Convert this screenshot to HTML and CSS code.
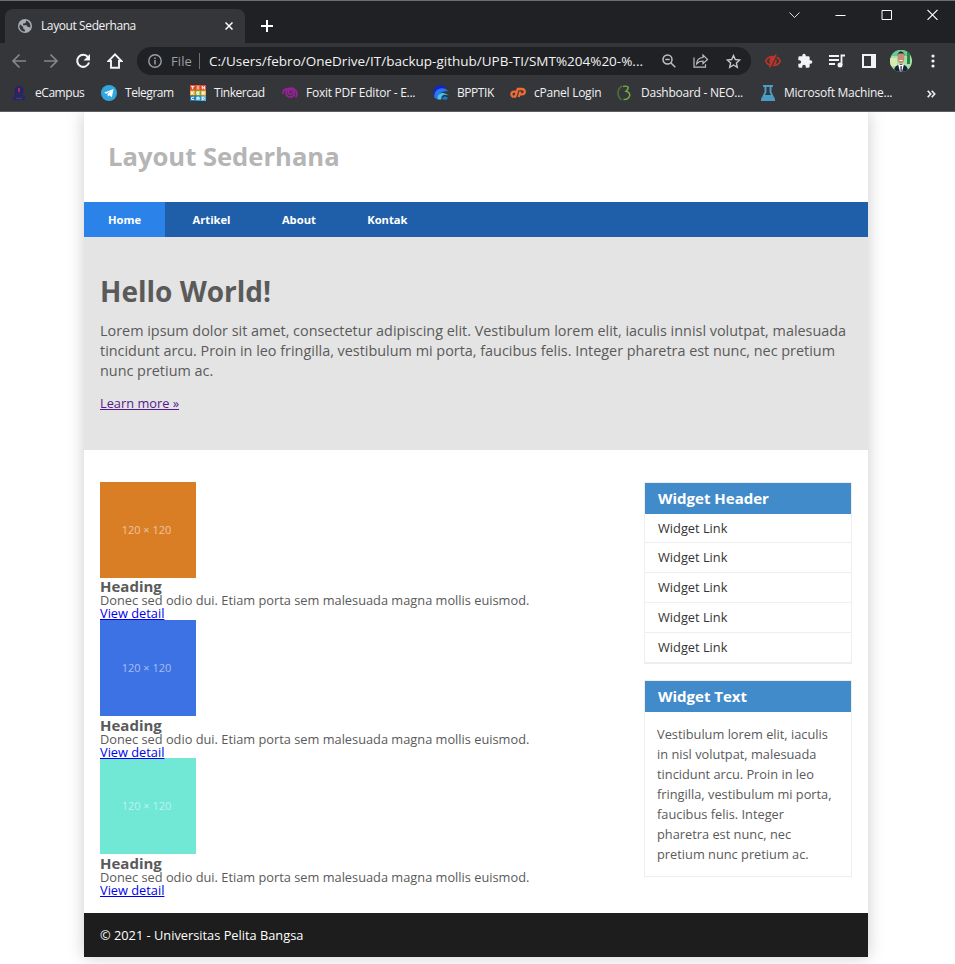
FILE: index.html
```html
<!DOCTYPE html>
<html lang="id">
<head>
<meta charset="utf-8">
<title>Layout Sederhana</title>
<link rel="stylesheet" href="styles.css">
</head>
<body>
<div class="browser">
  <div class="tabstrip">
    <div class="tab">
      <svg class="globe" width="14" height="14" viewBox="0 0 14 14"><circle cx="7" cy="7" r="7" fill="#a9adb2"/><path d="M2 5.2 5.2 8v1.4L7 11v1.6C3.800 12.600 1.400 10.200 1.400 7ZM8 1.500v1.700L6.500 4.400H5v1.800h3.400L9.800 8h1.400l1 .8c.9-2.800-.700-6.400-4.200-7.300Z" fill="#35363a"/></svg>
      <span class="tab-title">Layout Sederhana</span>
      <svg class="tab-close" width="8" height="8" viewBox="0 0 8 8"><path d="m.5.5 7 7m0-7-7 7" stroke="#fff" stroke-width="1.5"/></svg>
    </div>
    <svg class="new-tab" width="12" height="12" viewBox="0 0 12 12"><path d="M6 0v12M0 6h12" stroke="#fff" stroke-width="2"/></svg>
    <div class="window-controls">
      <svg width="11" height="11" viewBox="0 0 11 11"><path d="m.5 3.500 5 5 5-5" fill="none" stroke="#ddd"/></svg>
      <svg width="11" height="11" viewBox="0 0 11 11"><path d="M.5 6.500h10" stroke="#fff"/></svg>
      <svg width="11" height="11" viewBox="0 0 11 11"><path d="M1 1.500h9.500v9H1Z" fill="none" stroke="#fff"/></svg>
      <svg width="11" height="11" viewBox="0 0 11 11"><path d="m.5.8 10 10m0-10-10 10" stroke="#fff" stroke-width="1.200"/></svg>
    </div>
  </div>
  <div class="toolbar">
    <div class="nav-icons">
      <svg width="16" height="16" viewBox="0 0 16 16"><path d="M15 8H2m6.500-6.500L2 8l6.500 6.500" fill="none" stroke="#85878a" stroke-width="1.700"/></svg>
      <svg width="16" height="16" viewBox="0 0 16 16"><path d="M1 8h13M7.500 1.500 14 8l-6.500 6.500" fill="none" stroke="#85878a" stroke-width="1.700"/></svg>
      <svg width="16" height="16" viewBox="0 0 16 16"><path d="M13 4.200A6 6 0 1 0 14 9.500" fill="none" stroke="#f4f4f4" stroke-width="2"/><path d="M15 1v6.500H8.500Z" fill="#f4f4f4"/></svg>
      <svg width="16" height="16" viewBox="0 0 16 16"><path d="M8 1.400 1.500 8H4v6.800h8V8h2.500Z" fill="none" stroke="#f4f4f4" stroke-width="1.900"/></svg>
    </div>
    <div class="omnibox">
      <svg class="info" width="14" height="14" viewBox="0 0 14 14"><circle cx="7" cy="7" r="6.200" fill="none" stroke="#9aa0a6" stroke-width="1.400"/><path d="M7 6v4.500M7 3.400v1.500" stroke="#9aa0a6" stroke-width="1.500"/></svg>
      <span class="scheme">File</span>
      <span class="divider"></span>
      <span class="url">C:/Users/febro/OneDrive/IT/backup-github/UPB-TI/SMT%204%20-%...</span>
      <div class="omni-actions">
        <svg width="14" height="14" viewBox="0 0 14 14"><circle cx="5.500" cy="5.500" r="4.500" fill="none" stroke="#bcbfc3" stroke-width="1.500"/><path d="m9 9 4.300 4.300M3.300 5.500h4.400" stroke="#bcbfc3" stroke-width="1.500"/></svg>
        <svg width="16" height="14" viewBox="0 0 16 14"><path d="M1 3.500v9.700h11.500v-3M10 1v2.500C6 3.700 4 6 3.600 9.800 5.200 7.700 7 7 10 7v2.700L14.500 5.400Z" fill="none" stroke="#bcbfc3" stroke-width="1.200"/></svg>
        <svg width="15" height="15" viewBox="0 0 15 15"><path d="m7.500 1.500 1.800 4 4.400.500-3.300 2.900.9 4.400-3.800-2.300-3.800 2.300.9-4.400L1.300 6l4.400-.5Z" fill="none" stroke="#c4c7ca" stroke-width="1.400"/></svg>
      </div>
    </div>
    <div class="extensions">
      <svg width="16" height="14" viewBox="0 0 16 14"><path d="M.7 7C3.400 1 12.600 1 15.300 7 12.600 13 3.400 13 .7 7Z" fill="none" stroke="#bd3527" stroke-width="1.600"/><ellipse cx="8" cy="7" rx="3.600" ry="4.500" fill="#bd3527"/><path d="M12.500 0 6 14" stroke="#35363a" stroke-width="1.300"/><path d="M11 .5 4.500 13.500" stroke="#bd3527" stroke-width="1.500"/></svg>
      <svg width="16" height="16" viewBox="0 0 24 24"><path fill="#f1f3f4" d="M20.500 11H19V7a2 2 0 0 0-2-2h-4V3.500a2.500 2.500 0 0 0-5 0V5H4a2 2 0 0 0-2 2v3.800h1.500a2.700 2.700 0 0 1 0 5.400H2V20a2 2 0 0 0 2 2h3.800v-1.500a2.700 2.700 0 0 1 5.400 0V22H17a2 2 0 0 0 2-2v-4h1.500a2.500 2.500 0 0 0 0-5Z"/></svg>
      <svg width="16" height="14" viewBox="0 0 16 14"><path d="M0 2h10M0 6h10M0 10h6M12.500 11V1.500H16" fill="none" stroke="#f1f3f4" stroke-width="1.800"/><circle cx="11" cy="11" r="2.500" fill="#f1f3f4"/></svg>
      <svg width="14" height="14" viewBox="0 0 14 14"><path fill="#f1f3f4" fill-rule="evenodd" d="M0 0h14v14H0ZM2 2v10h7V2Z"/></svg>
      <svg class="avatar" width="22" height="22" viewBox="0 0 22 22"><defs><clipPath id="face"><circle cx="11" cy="11" r="11"/></clipPath></defs><g clip-path="url(#face)"><path fill="#a7dfaa" d="M0 0h22v22H0Z"/><path fill="#69c798" d="M0 0h22v6H0Z"/><path fill="#25873d" d="M17 2h3v12h-3Z"/><path fill="#d7ebb0" d="M0 8h7v8H0Z"/><path fill="#182238" d="M4 22c0-6 3-7 7-8 5 1 7 3 7 8Z"/><path fill="#fff" d="m8 14 3 1 3-1-2 8h-2Z"/><path fill="#18223b" d="M10.500 16h1.200v6h-1.200Z"/><ellipse cx="11" cy="8" rx="3.400" ry="5.500" fill="#c98b73"/><path fill="#282326" d="M7.600 6c-.5-6 7-6 7 0l-1-2.500H8.500Z"/><path d="M9.500 10.500h3" stroke="#fff"/></g></svg>
      <svg class="menu" width="4" height="14" viewBox="0 0 4 14"><g fill="#f1f3f4"><circle cx="2" cy="2" r="1.600"/><circle cx="2" cy="7" r="1.600"/><circle cx="2" cy="12" r="1.600"/></g></svg>
    </div>
  </div>
  <div class="bookmarks">
    <div class="bookmark"><svg width="14" height="16" viewBox="0 0 14 16"><path fill="#24236c" d="M5 1h4l2.500 3v4l-1 2 2.500 2v3H1v-3l2.500-2-1-2V4Z"/><path d="M2 12h10M4 9h6" stroke="#35363a" stroke-width=".8"/><path d="M7 3v4" stroke="#b8323a" stroke-width="1.800"/><path d="M4 13.500h6" stroke="#443f86"/></svg><span class="t1">eCampus</span></div>
    <div class="bookmark"><svg width="16" height="16" viewBox="0 0 16 16"><circle cx="8" cy="8" r="8" fill="#32a7df"/><path fill="#fff" d="m3 7.800 9.500-3.900-1.600 8.300-2.700-2-1.400 1.400-.3-2.500 3.600-3.300-4.600 2.900Z"/></svg><span class="t2">Telegram</span></div>
    <div class="bookmark"><svg width="16" height="16" viewBox="0 0 15 15"><path fill="#e74b35" d="M0 0h5v5H0Z"/><path fill="#ef672d" d="M5 0h5v5H5Z"/><path fill="#e94833" d="M10 0h5v5h-5Z"/><path fill="#f7a72d" d="M0 5h5v5H0Z"/><path fill="#9ac43c" d="M5 5h5v5H5Z"/><path fill="#f2b632" d="M10 5h5v5h-5Z"/><path fill="#1777ae" d="M0 10h5v5H0Z"/><path fill="#299ad1" d="M5 10h5v5H5Z"/><path fill="#5db5d9" d="M10 10h5v5h-5Z"/><path d="M1 1.500h3M2.500 1.500V4M7.500 1v3M11.500 4V1l2.200 3V1M1.500 6v3m2.200-3-2 1.500 2 1.500M9 6.500H6.500v2.200H9M6.500 7.500h2M11.500 9V6.500h2v1.200h-2l2.200 1.500M4 11.500H1.500v2H4M6.500 14v-2.500h2V14m-2-1h2M11.500 11.500h1.200l1 1-1 1h-1.200Z" fill="none" stroke="#fff" stroke-width=".9"/></svg><span class="t3">Tinkercad</span></div>
    <div class="bookmark"><svg width="16" height="16" viewBox="0 0 16 16"><path fill="none" stroke="#9b209c" stroke-width="1.700" d="M9.700 7.200c1 1.300-.6 2.700-2.200 1.900-2-1-1.100-4 1.600-3.900 3 .1 4.300 3.300 2.400 5.500-2.600 2.800-7.700 1-7.500-3C4.200 3.600 9 2 12.300 4.200c3 2 3.300 5.800 1.200 8.300M5.500 4C2.500 3.300.5 6 1.100 9"/></svg><span class="t4">Foxit PDF Editor - E...</span></div>
    <div class="bookmark"><svg width="16" height="16" viewBox="0 0 16 16"><path fill="#1524ca" d="M.5 10C-.5 3 4 0 9 0l5 2.500-6 1-5 6Z"/><path fill="#2878ec" d="M1.500 13C0 4 10 0 15.500 6.500 11 5.500 6 7 4.500 14Z"/><path fill="#45c4ee" d="M4.500 14.500C4 7.500 10.500 6 15.800 10.500c-5-2-8 0-7.500 4Z"/><path fill="#157bd4" d="M9 14c.5-3 4-3.500 6-1l-2 2Z"/></svg><span class="t5">BPPTIK</span></div>
    <div class="bookmark"><svg width="16" height="16" viewBox="0 0 16 16"><path d="M6.300 6.600H4.200C.5 6.600.5 11.700 4 11.700h1.300L7.800 4h4c4.300 0 3.700 5.400 0 5.400H9.500M8.700 12l1.700-5.500" fill="none" stroke="#f16c35" stroke-width="2.300"/></svg><span class="t6">cPanel Login</span></div>
    <div class="bookmark"><svg width="14" height="16" viewBox="0 0 14 16"><path d="M5 1C0 4-.5 11 4.500 15" fill="none" stroke="#496e2e" stroke-width="1.700"/><path d="M6 1.500c6.500-1.500 6 2 3 4.800 6 1.200 4.500 8.200-2.500 8.200" fill="none" stroke="#75ab41" stroke-width="1.500"/></svg><span class="t7">Dashboard - NEO...</span></div>
    <div class="bookmark"><svg width="14" height="16" viewBox="0 0 14 16"><path fill="#4c9bc3" fill-rule="evenodd" d="M2 0h10v2h-1.500v5L14 14v2H0v-2l3.500-7V2H2Zm3.500 2v5.500L4 10h6L8.500 7.500V2Z"/></svg><span class="t8">Microsoft Machine...</span></div>
    <svg class="more" width="9" height="8" viewBox="0 0 9 8"><path d="m.7.7 3 3.300-3 3.300m4-6.600 3 3.300-3 3.300" fill="none" stroke="#eee" stroke-width="1.700"/></svg>
  </div>
</div>
<div class="container">
  <header class="site-header"><h1>Layout Sederhana</h1></header>
  <nav class="site-nav"><a class="active">Home</a><a>Artikel</a><a>About</a><a>Kontak</a></nav>
  <section class="hero">
    <h1>Hello World!</h1>
    <p>Lorem ipsum dolor sit amet, consectetur adipiscing elit. Vestibulum lorem elit, iaculis innisl volutpat, malesuada<br>tincidunt arcu. Proin in leo fringilla, vestibulum mi porta, faucibus felis. Integer pharetra est nunc, nec pretium<br>nunc pretium ac.</p>
    <a class="learn" href="#">Learn more »</a>
  </section>
  <div class="wrapper">
    <main>
      <article><div class="thumb orange">120 × 120</div><h2>Heading</h2><p>Donec sed odio dui. Etiam porta sem malesuada magna mollis euismod.</p><a href="#">View detail</a></article>
      <article><div class="thumb blue">120 × 120</div><h2>Heading</h2><p>Donec sed odio dui. Etiam porta sem malesuada magna mollis euismod.</p><a href="#">View detail</a></article>
      <article><div class="thumb mint">120 × 120</div><h2>Heading</h2><p>Donec sed odio dui. Etiam porta sem malesuada magna mollis euismod.</p><a href="#">View detail</a></article>
    </main>
    <aside>
      <section class="widget links"><h3>Widget Header</h3><ul><li>Widget Link</li><li>Widget Link</li><li>Widget Link</li><li>Widget Link</li><li>Widget Link</li></ul></section>
      <section class="widget"><h3>Widget Text</h3><p>Vestibulum lorem elit, iaculis<br>in nisl volutpat, malesuada<br>tincidunt arcu. Proin in leo<br>fringilla, vestibulum mi porta,<br>faucibus felis. Integer<br>pharetra est nunc, nec<br>pretium nunc pretium ac.</p></section>
    </aside>
  </div>
  <footer>© 2021 - Universitas Pelita Bangsa</footer>
</div>
</body>
</html>
```
FILE: styles.css
```css
* { box-sizing: border-box; margin: 0; padding: 0; }
html { height: 964px; overflow: hidden; }
body { height: 964px; overflow: hidden; background: #fff; color: #5a5a5a; font: 12.8px/13px "Open Sans", sans-serif; }
svg { display: block; flex: none; }

/* Browser frame */
.browser { position: relative; z-index: 1; height: 112px; background: #35363a; border-top: 1px solid #6b6e6c; border-bottom: 1px solid #5d5e62; color: #f2f2f2; font: 12px/16px "Open Sans", sans-serif; white-space: nowrap; }
.tabstrip { display: flex; height: 42px; padding: 8px 17.5px 0 5px; background: #202124; }
.tab { display: flex; align-items: center; width: 240px; height: 34px; padding: 0 12px 0 13px; background: #35363a; border-radius: 8px 8px 0 0; }
.tab-title { margin-left: 9px; letter-spacing: -.4px; }
.tab-close { margin-left: auto; }
.new-tab { margin: 11px 0 0 16px; }
.window-controls { display: flex; gap: 35px; margin-left: auto; }
.toolbar { display: flex; align-items: center; height: 36px; padding: 0 19px 0 11px; }
.nav-icons { display: flex; gap: 16px; }
.omnibox { display: flex; align-items: center; width: 614px; height: 28px; margin-left: 14px; padding: 0 10px 0 11px; background: #202124; border-radius: 14px; font-size: 13px; }
.scheme { margin-left: 9px; color: #9aa0a6; letter-spacing: .1px; }
.divider { width: 1px; height: 16px; margin: 0 9px 0 7px; background: #6d7074; }
.url { width: 436px; font-size: 13.5px; }
.omni-actions { display: flex; align-items: center; gap: 17px; margin-left: auto; }
.extensions { display: flex; align-items: center; gap: 16px; margin-left: 14px; }
.extensions svg:nth-child(4) { margin-left: 1px; }
.extensions svg:nth-child(5) { margin-left: -2px; }
.extensions .menu { margin-left: 3px; }
.bookmarks { display: grid; grid-template-columns: 89px 89px 92px 151px 77px 107px 144px 166px 9px; align-items: center; height: 24px; margin-top: 2px; padding-left: 12px; }
.bookmark { display: flex; align-items: center; gap: 8px; }
.bookmark:first-child, .bookmark:nth-child(8) { gap: 9px; }
.bookmark:nth-child(7) { gap: 10px; }
.t1, .t2, .t3, .t5 { letter-spacing: -.45px; }
.t4, .t6, .t7, .t8 { letter-spacing: -.25px; }
.more { margin-top: 1px; }

/* Page */
.container { width: 784px; height: 845px; margin-left: 84px; background: #fff; box-shadow: 0 0 16px #ccc; }
.site-header { height: 90px; padding: 28px 24px 0; color: #b5b5b5; }
.site-header h1 { font-size: 25.6px; line-height: 34px; }
.site-nav { display: flex; height: 35px; background: #1f5faa; color: #fff; font-weight: 700; font-size: 11.200px; line-height: 35px; }
.site-nav a { padding: 0 24px; margin-right: 3.400px; }
.site-nav .active { background: #2b83ea; }
.hero { height: 213px; padding: 36px 16px 0; background: #e4e4e4; }
.hero h1 { font-size: 28px; line-height: 36px; }
.hero p { margin-top: 12px; font-size: 14.400px; line-height: 20px; white-space: nowrap; }
.learn { display: inline-block; margin-top: 16px; color: #551a8b; }
a[href] { text-decoration: underline; }
.wrapper { display: flex; justify-content: space-between; height: 463px; padding: 32px 16px 0; }
article { height: 138px; white-space: nowrap; }
article a { display: block; color: #0000ee; }
.thumb { width: 96px; height: 96px; padding-right: 3px; font-size: 11px; line-height: 95px; text-align: center; color: rgba(255,255,255,.55); }
.orange { background: #da7e26; }
.blue { background: #3c72e4; }
.mint { background: #71e7d5; }
article h2 { font-size: 15px; line-height: 16px; margin-top: 1px; }
article:first-child h2 { margin-top: 0; }
aside { width: 208px; }
.widget { height: 197px; margin-bottom: 16px; border: 1px solid #eee; }
.links { height: 182px; }
aside h3 { height: 31px; padding-left: 13px; background: #428bca; color: #fff; font-size: 15px; line-height: 31px; }
ul { list-style: none; }
li { height: 30px; padding-left: 13px; border-bottom: 1px solid #eee; color: #333; line-height: 29px; }
li:first-child { height: 29px; }
.widget p { padding: 12px; line-height: 20px; white-space: nowrap; }
footer { height: 44px; padding-left: 16px; background: #1d1d1d; color: #fff; line-height: 44px; }
```
